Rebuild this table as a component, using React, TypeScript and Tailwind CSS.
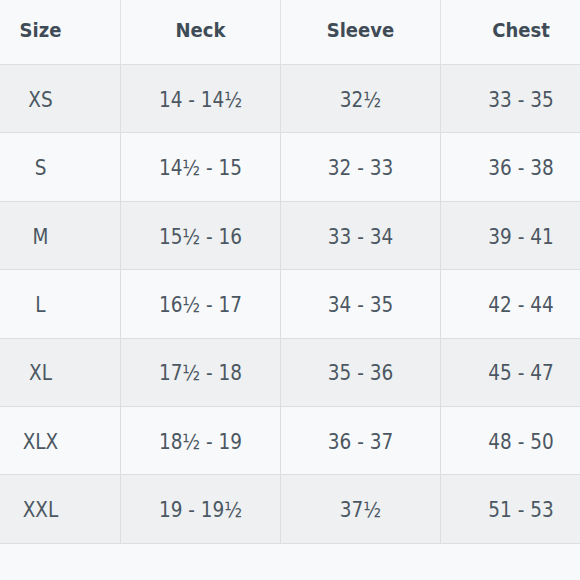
import React from "react";

const rows: string[][] = [
  ["XS", "14 - 14½", "32½", "33 - 35"],
  ["S", "14½ - 15", "32 - 33", "36 - 38"],
  ["M", "15½ - 16", "33 - 34", "39 - 41"],
  ["L", "16½ - 17", "34 - 35", "42 - 44"],
  ["XL", "17½ - 18", "35 - 36", "45 - 47"],
  ["XLX", "18½ - 19", "36 - 37", "48 - 50"],
  ["XXL", "19 - 19½", "37½", "51 - 53"],
];

export default function App() {
  return (
    <div
      className="w-[580px] h-[580px] overflow-hidden bg-[#f8f9fa] font-stretch-condensed"
      style={{ fontFamily: '"DejaVu Sans Condensed", "DejaVu Sans", sans-serif' }}
    >
      <div className="ml-[-39px] w-[640px] border-b border-[#dcdfe2]">
        <div className="grid grid-cols-[160px_160px_160px_160px] h-[64px] bg-[#f8f9fa]">
          {["Size", "Neck", "Sleeve", "Chest"].map((h, i) => (
            <div
              key={h}
              className={`flex items-center justify-center pb-[4px] text-[20px] font-bold text-[#3f4c57] ${i < 3 ? "border-r border-[#e0e3e6]" : ""}`}
            >
              {h}
            </div>
          ))}
        </div>
        {rows.map((r, ri) => (
          <div
            key={ri}
            className={`grid grid-cols-[160px_160px_160px_160px] h-[68.4px] border-t border-[#dcdfe2] ${ri % 2 === 0 ? "bg-[#eef0f1]" : "bg-[#f8f9fa]"}`}
          >
            {r.map((c, ci) => (
              <div
                key={ci}
                className={`flex items-center justify-center pt-[3px] text-[20.5px] text-[#4b5762] ${ci < 3 ? "border-r border-[#dcdfe2]" : ""}`}
              >
                {c}
              </div>
            ))}
          </div>
        ))}
      </div>
    </div>
  );
}
